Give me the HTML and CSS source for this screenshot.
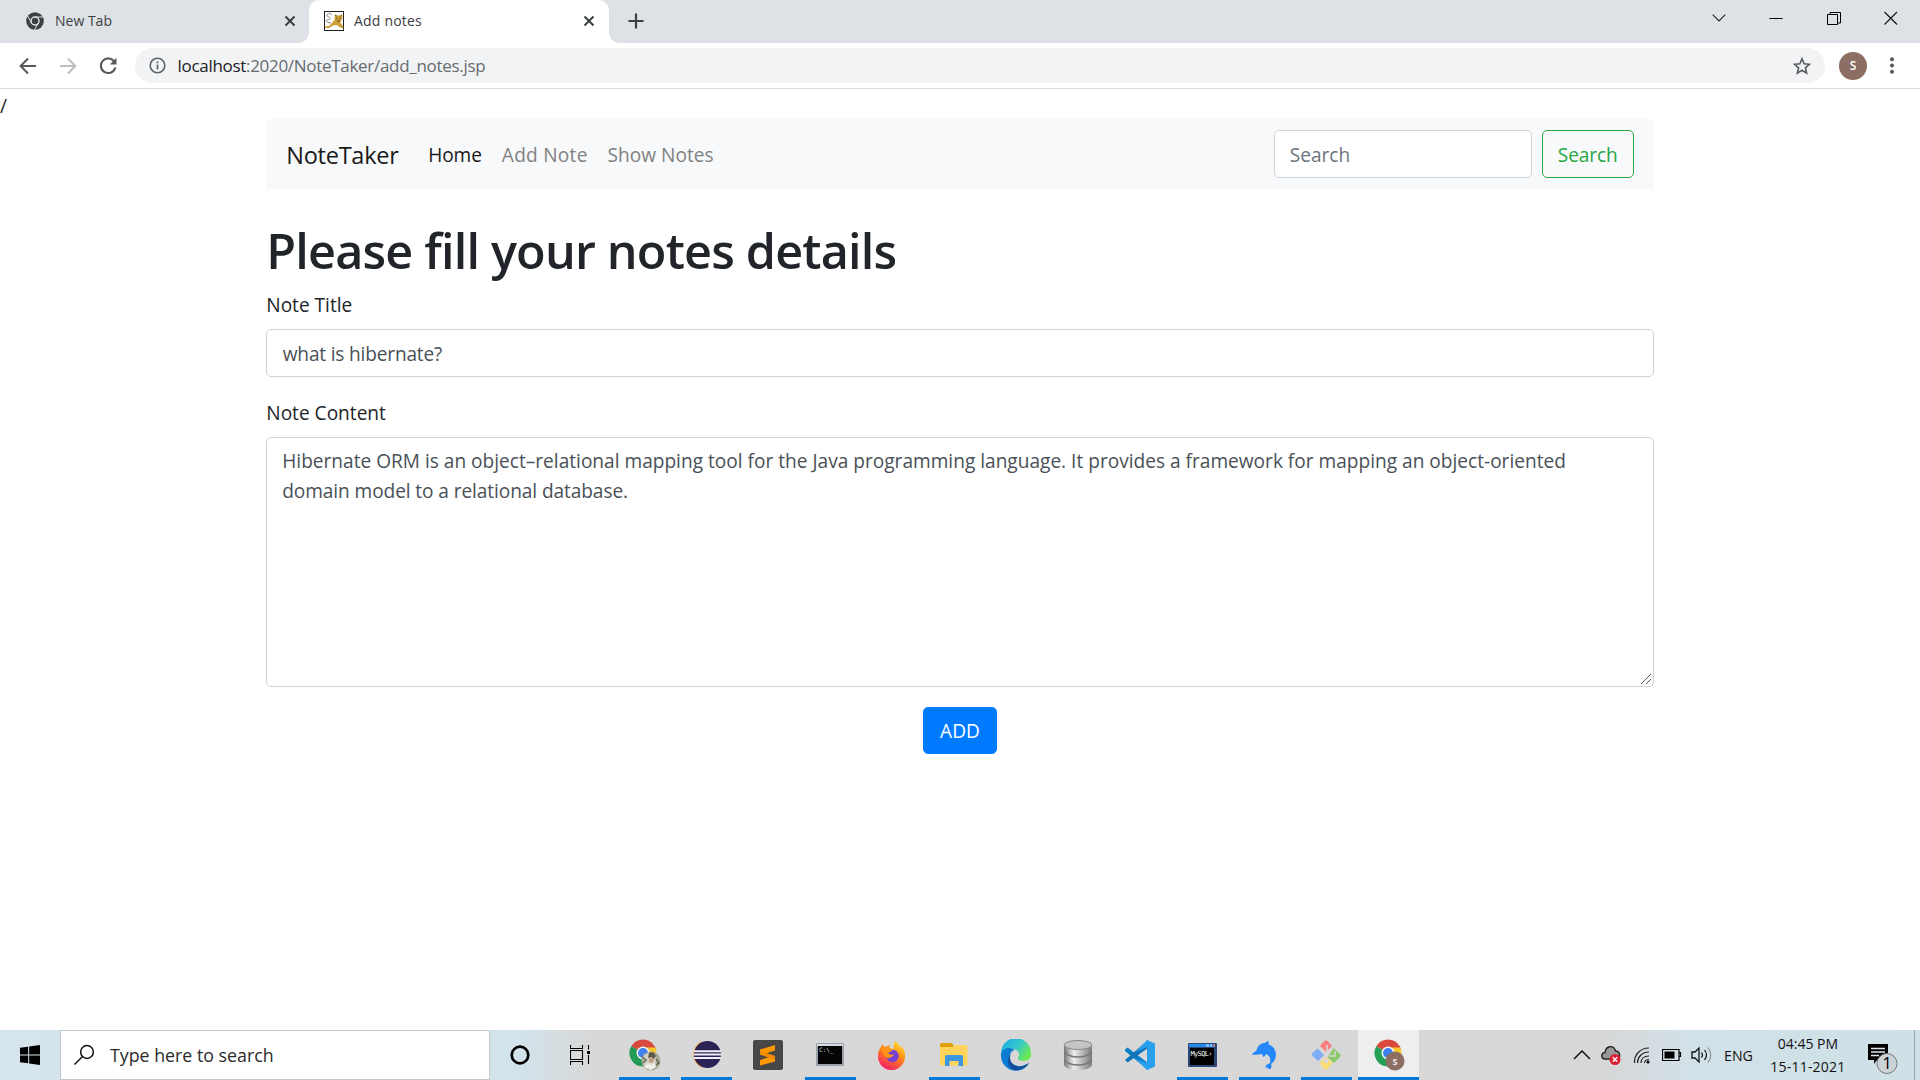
FILE: index.html
```html
<!DOCTYPE html>
<html lang="en">
<head>
<meta charset="utf-8">
<title>Add notes</title>
<link rel="stylesheet" href="styles.css">
</head>
<body>
<header class="tabstrip">
  <div class="tab tab-idle">
    <svg class="chrome-mono" width="18" height="18" viewBox="0 0 18 18"><circle cx="9" cy="9" r="8.8" fill="#3c4043"/><circle cx="9" cy="9" r="4" fill="none" stroke="#dee1e6" stroke-width="1.500"/><path d="M9 5H17M5.500 10.900 1.700 4M12.500 10.900 8.400 17.800" stroke="#dee1e6" stroke-width="1"/></svg>
    <span class="tab-title t-new">New Tab</span>
    <svg class="tab-close" width="12" height="12" viewBox="0 0 12 12"><path d="M1.500 1.500l9 9M10.500 1.500l-9 9" stroke="#3c4043" stroke-width="2"/></svg>
  </div>
  <div class="tab tab-active">
    <svg class="tomcat" width="20" height="20" viewBox="0 0 20 20"><rect x=".5" y=".5" width="19" height="19" fill="#fff" stroke="#222"/><path d="M11 3l2 1.500h3L18 3l.500 3.500-1 3-1.500 1.500 3 4 .5 2.500-3-1-4-2.500-3.500.5-4 2.500H1V15.500l4-.5 3-3 2.500-3z" fill="#cf9d35"/><path d="M11.500 4l1 1.500M17.500 4l-1 1.500M12.500 7.500h1M15.500 7.500h1M13 10h3" stroke="#5b4720" fill="none"/><path d="M7 12C3 12 1 10 3 9s4 0 3-2-4-1-3-3 4-2 5 0" stroke="#888" fill="none" stroke-width="1"/></svg>
    <span class="tab-title t-add">Add notes</span>
    <svg class="tab-close" width="12" height="12" viewBox="0 0 12 12"><path d="M1.500 1.500l9 9M10.500 1.500l-9 9" stroke="#3c4043" stroke-width="2"/></svg>
  </div>
  <svg class="new-tab" width="16" height="16" viewBox="0 0 16 16"><path d="M8 .5v15M.5 8h15" stroke="#3c4043" stroke-width="2.200"/></svg>
  <div class="window-buttons">
    <svg width="14" height="14" viewBox="0 0 14 14"><path d="M.7 3.700 7 10l6.300-6.300" fill="none" stroke="#222" stroke-width="1.100"/></svg>
    <svg width="14" height="14" viewBox="0 0 14 14"><path d="M.5 7.500h13" stroke="#000"/></svg>
    <svg width="14" height="14" viewBox="0 0 14 14"><path d="M.5 3.500h10v10H.5zM3 3V1.500h10.500v10.500H11" fill="none" stroke="#000"/></svg>
    <svg width="14" height="14" viewBox="0 0 14 14"><path d="M.5 1l12.500 12.500M13 1 .5 13.500" stroke="#111" stroke-width="1.100"/></svg>
  </div>
</header>
<div class="toolbar">
  <svg width="18" height="18" viewBox="0 0 18 18"><path d="M17 9H2M9 1.500 1.600 9 9 16.500" fill="none" stroke="#55595d" stroke-width="2"/></svg>
  <svg width="18" height="18" viewBox="0 0 18 18"><path d="M1 9h15M9 1.500 16.400 9 9 16.500" fill="none" stroke="#bcbec1" stroke-width="2"/></svg>
  <svg width="18" height="18" viewBox="0 0 18 18"><path d="M15.500 5A7.300 7.300 0 1 0 16.300 10.500" fill="none" stroke="#55595d" stroke-width="2.100"/><path d="M17.500.8V7.500H10.800z" fill="#55595d"/></svg>
  <div class="omnibox">
    <svg width="17" height="17" viewBox="0 0 17 17"><circle cx="8.500" cy="8.500" r="7.300" fill="none" stroke="#5f6368" stroke-width="1.600"/><path d="M8.500 7.500v5M8.500 4.500v1.700" stroke="#5f6368" stroke-width="1.700"/></svg>
    <span class="url"><span class="host">localhost</span>:2020/NoteTaker/add_notes.jsp</span>
    <svg class="star" width="18" height="18" viewBox="0 0 18 18"><path d="M9 1.800l2.100 5 5.300.5-4 3.500 1.200 5.300L9 13.300l-4.600 2.800 1.200-5.300-4-3.500 5.300-.5z" fill="none" stroke="#55595d" stroke-width="1.600"/></svg>
  </div>
  <span class="avatar">S</span>
  <svg class="kebab" width="4" height="17" viewBox="0 0 4 17"><g fill="#55595d"><circle cx="2" cy="2.200" r="2"/><circle cx="2" cy="8.500" r="2"/><circle cx="2" cy="14.800" r="2"/></g></svg>
</div>
<main class="page">
  <div class="stray">/</div>
  <div class="container">
    <nav class="navbar">
      <span class="brand">NoteTaker</span>
      <span class="link link-on">Home</span>
      <span class="link link-add">Add Note</span>
      <span class="link link-show">Show Notes</span>
      <div class="control search-field">Search</div>
      <div class="btn btn-outline">Search</div>
    </nav>
    <h1 class="heading"><span>Please fill your notes details</span></h1>
    <div class="label">Note Title</div>
    <div class="control title-field">what is hibernate?</div>
    <div class="label label-content">Note Content</div>
    <div class="control content-field"><span class="line-one">Hibernate ORM is an object–relational mapping tool for the Java programming language. It provides a framework for mapping an object-oriented</span><br><span class="line-two">domain model to a relational database.</span>
      <svg class="grip" width="12" height="12" viewBox="0 0 12 12"><path d="M1 11 11 1M6 11l5-5" stroke="#555" stroke-width="1"/></svg>
    </div>
    <div class="actions"><div class="btn btn-primary">ADD</div></div>
  </div>
</main>
<footer class="taskbar">
  <div class="start"><svg width="20" height="20" viewBox="0 0 20 20"><path d="M0 2.800 8.200 1.700V9.500H0zM9.200 1.500 20 0v9.500H9.200zM0 10.500h8.200v7.800L0 17.200zM9.200 10.500H20V20L9.200 18.500z"/></svg></div>
  <div class="task-search">
    <svg width="22" height="22" viewBox="0 0 22 22"><circle cx="14" cy="8" r="6.400" fill="none" stroke="#111" stroke-width="1.500"/><path d="M9.500 12.500 1.500 20.500" stroke="#111" stroke-width="1.500"/></svg>
    <span>Type here to search</span>
  </div>
  <div class="sys"><svg width="20" height="20" viewBox="0 0 20 20"><circle cx="10" cy="10" r="8.300" fill="none" stroke="#000" stroke-width="2.700"/></svg></div>
  <div class="sys sys-view"><svg width="20" height="20" viewBox="0 0 20 20"><path d="M.5 0v3.500h12V0M.5 5.500h12v9H.5zM.5 20v-3.500h12V20M18.500 0v4.500M18.500 10v9" fill="none" stroke="#000" stroke-width="1.100"/><path d="M17 6h3v3h-3z"/></svg></div>
  <div class="apps">
    <div class="app open first"><svg width="32" height="32" viewBox="0 0 32 32"><path d="M14 14 2.300 7.200A13.500 13.500 0 0 1 25.700 7.200L27 10H14z" fill="#d9493e"/><path d="M14 14 2.300 7.200A13.500 13.500 0 0 0 14 27.500L20 17z" fill="#249a56"/><path d="M14 14 20 17 14 27.500A13.500 13.500 0 0 0 26.300 8.500H14z" fill="#f5c52d"/><circle cx="14" cy="14" r="6.500" fill="#f5f5f5"/><circle cx="14" cy="14" r="5" fill="#3f82ee"/><circle cx="22" cy="22" r="9.500" fill="#aaa896"/><path d="M15 16l5-2 5 1 3 5-2 6-4 5-6-2-2-6z" fill="#d5d1c4"/><path d="M20 14l4-1 3 4-2 3-3-2-3 1z" fill="#5d5545"/><path d="M20 19l3-1 2 3-2 3-3-1z" fill="#c69c80"/><path d="M15 28l4-4 3 2 4-2 1 4-5 3z" fill="#efeee8"/><path d="M13 18l4 3-3 3M27 20l3 4-3 2" stroke="#62684f" fill="none" stroke-width="1.500"/></svg></div>
    <div class="app open"><svg width="32" height="32" viewBox="0 0 32 32"><path d="M13 2A14.200 14.200 0 0 0 13 29 17 17 0 0 1 13 2z" fill="#f7941e"/><circle cx="17.500" cy="15.500" r="13.500" fill="#2c2255"/><path d="M4 12.200h27M3.800 15.500h27.400M4 18.900h27" stroke="#eeeef8" stroke-width="2"/></svg></div>
    <div class="app"><svg width="32" height="32" viewBox="0 0 32 32"><rect x="1" y="1" width="30" height="30" rx="2" fill="#474747"/><path d="M8 10.500 23 6v5.500l-8.500 2.700L23 17v5.500L8 26.500V21l8.500-2.700L8 15.500z" fill="#ff9800"/><path d="M8 15.500V12l15 5v3.500z" fill="#f08a00"/></svg></div>
    <div class="app open"><svg width="32" height="32" viewBox="0 0 32 32"><rect x="2" y="4" width="28" height="23" rx="1" fill="#9ca2a9"/><path d="M3 5h26v2H3z" fill="#d5dae0"/><path d="M4 7h24v18H4z" fill="#050505"/><text x="5" y="12.500" class="console">C:\_</text></svg></div>
    <div class="app"><svg width="32" height="32" viewBox="0 0 32 32"><defs><linearGradient id="fox" x1=".8" y1="0" x2=".3" y2="1"><stop stop-color="#ffe32e"/><stop offset=".45" stop-color="#ff8a16"/><stop offset="1" stop-color="#f51b68"/></linearGradient></defs><path d="M19 2c4 3 5 5 5.500 7l1-2c3 4 4 7 3.500 11A13.500 13.500 0 0 1 2 17C2 13 3 10 5 8l1-3 3 3 5-2-1 3 5 1c-1-4 0-6 1-8z" fill="url(#fox)"/><circle cx="16.500" cy="17" r="6.200" fill="#7540d5"/><path d="M5 9l4 0 5-3-1 3 4 2-5 3c2 2 4 2 6 1-2 5-8 5-10 1z" fill="#ff9318"/></svg></div>
    <div class="app open"><svg width="32" height="32" viewBox="0 0 32 32"><path d="M2 5.500Q2 4 3.500 4H14l2 4H2z" fill="#dda000"/><path d="M2 8h13l2-2h11q1.500 0 1.500 1.500V25q0 1.500-1.500 1.500H3.500Q2 26.500 2 25z" fill="#ffd45d"/><path d="M7 27V18q0-2 2-2h14q2 0 2 2v9h-4.500v-5h-9v5z" fill="#3c97df"/></svg></div>
    <div class="app"><svg width="32" height="32" viewBox="0 0 32 32"><defs><linearGradient id="edge" x1="0" y1="0" x2="1" y2=".6"><stop stop-color="#16a8e0"/><stop offset=".55" stop-color="#35c6ce"/><stop offset="1" stop-color="#6bea50"/></linearGradient></defs><path d="M1 14A15 15 0 0 1 31 14c1 8-7 9-12 7-2-1-1-3 0-4 1-5-5-9-11-7-4 1-6 3-7 6z" fill="url(#edge)"/><path d="M1 15C2 9 10 7 15 11c-5 0-8 9-2 14 4 3 10 3 16-1A15 15 0 0 1 1 15z" fill="#087bd2"/><path d="M15 12c-7 2-6 11-1 14 5 3 10 1 15-2-3 5-9 8-15 7-9-4-7-16 1-19z" fill="#134f9b"/></svg></div>
    <div class="app"><svg width="32" height="32" viewBox="0 0 32 32"><defs><linearGradient id="disk"><stop stop-color="#777"/><stop offset=".35" stop-color="#eee"/><stop offset="1" stop-color="#7a7a7a"/></linearGradient></defs><path d="M2 5v21q2 5 14 5t14-5V5z" fill="url(#disk)"/><ellipse cx="16" cy="6" rx="14" ry="4.500" fill="#c4c4c4" stroke="#888"/><path d="M2 13q5 5 14 5t14-5M2 21q5 5 14 5t14-5" fill="none" stroke="#777" stroke-width="1.500"/></svg></div>
    <div class="app"><svg width="32" height="32" viewBox="0 0 32 32"><path d="M1 10.500 3.500 8.500 24 24v7L1 12z" fill="#087fc7"/><path d="M1 21 24 1v8L3.500 23.500z" fill="#1174b9"/><path d="M23 1l8 3.500v23L23 31 12 20l11 4V8L12 13z" fill="#28a0ec"/></svg></div>
    <div class="app open"><svg width="32" height="32" viewBox="0 0 32 32"><rect x="2" y="4" width="29" height="24" rx="1" fill="#294875"/><path d="M3 5h26v3H3z" fill="#2589e8"/><path d="M20 5.500h3v2h-3zM24 5.500h2v2h-2z" fill="#9ad2ff"/><path d="M27 5.500h2v2h-2z" fill="#f07642"/><path d="M4 9h24v17H4z" fill="#000"/><text x="4.500" y="17" class="mysql" textLength="22">MySQL›</text></svg></div>
    <div class="app open"><svg width="32" height="32" viewBox="0 0 32 32"><path d="M4 15.500c1-2 3-2.500 4.500-4C10 6 13 4 17 4c1-1 2-2 3.500-2 .5 1.500 0 2.500 0 3.500 6 2 8.500 8 7 13.500-1 3-3 5-4.500 6 1 2 .5 4-1 5.500-1-1.500-3-1-4.500-2.500 0-2.500 3-3 4.500-4 1-4-.5-8-4-9-.5 1.500-1.500 2.500-3 3 0-1.500-.5-2.500-1.500-3-3 0-6 1.500-9.500.5z" fill="#2488fc"/></svg></div>
    <div class="app open"><svg width="32" height="32" viewBox="0 0 32 32"><path d="M10 7l4.500-5q1.500-1.500 3 0L22 7l-6 6z" fill="#f9807c"/><path d="M7.500 9.500 14 16l-6 6-5.500-5q-1.300-1.500 0-3z" fill="#80adf8"/><path d="M16 18l6.500 6-5 6q-1.500 1.500-3 0L9.500 24z" fill="#fbdd75"/><path d="M23.500 9 30 15q1.500 1.500 0 3L24 24l-6.500-6 5-7z" fill="#8acb68"/><path d="M17 6v10l-4 4M25 12v5h-6" stroke="#d9d9d9" stroke-width="1.500" fill="none"/><circle cx="16" cy="22" r="2.200" fill="#d9d9d9"/></svg></div>
    <div class="app open active"><svg width="32" height="32" viewBox="0 0 32 32"><path d="M15 14 3.300 7.200A13.500 13.500 0 0 1 26.700 7.200L28 10H15z" fill="#dd4a3d"/><path d="M15 14 3.300 7.200A13.500 13.500 0 0 0 15 27.500L21 17z" fill="#25a057"/><path d="M15 14 21 17 15 27.500A13.500 13.500 0 0 0 27.300 8.500H15z" fill="#f9ca2c"/><circle cx="15" cy="14" r="6.500" fill="#fff"/><circle cx="15" cy="14" r="5" fill="#3b80ed"/><circle cx="22" cy="22" r="9.500" fill="#8d6e63"/><text x="22" y="25.500" class="mini">S</text></svg></div>
  </div>
  <div class="tray">
    <svg width="18" height="20" viewBox="0 0 18 20"><path d="M1 14 9 6l8 8" fill="none" stroke="#111" stroke-width="1.500"/></svg>
    <svg class="cloud" width="22" height="22" viewBox="0 0 22 22"><path d="M5 15C1 15 .5 9 5 8.500 6 1 14 1 15.500 7c5 0 5.500 8 1 8z" fill="#999" stroke="#222" stroke-width="1.400"/><circle cx="15" cy="15.500" r="5.500" fill="#db1f33"/><path d="M12.800 13.300l4.400 4.400M17.200 13.300l-4.400 4.400" stroke="#fff" stroke-width="1.400"/></svg>
    <svg width="18" height="20" viewBox="0 0 18 20"><path d="M1.500 18C1 10 7 3 16 3M4.500 18C4.500 12 9 7 16 7M8 18c0-4 3-7 8-7M11.500 18c0-2 2-3.500 4.500-3.500" fill="none" stroke="#222" stroke-width="1.200"/><circle cx="15" cy="17" r="1.500"/></svg>
    <svg width="20" height="12" viewBox="0 0 20 12"><path d="M.5.5h16.500v11H.5zM17 3.500h1.500v4H17" fill="none" stroke="#000" stroke-width="1.200"/><path d="M2.500 2.500h10v7h-10z"/></svg>
    <svg class="speaker" width="22" height="20" viewBox="0 0 22 20"><path d="M1 7h3l4-4v14l-4-4H1z" fill="none" stroke="#111" stroke-width="1.300"/><path d="M10.500 7.500q2 2.500 0 5M13.500 5q4 5 0 10" fill="none" stroke="#111" stroke-width="1.200"/><path d="M17 2.500q5.500 7.500 0 15" fill="none" stroke="#889399" stroke-width="1.200"/></svg>
    <span class="lang">ENG</span>
    <div class="clock"><span class="time">04:45 PM</span><span class="date">15-11-2021</span></div>
    <svg class="notice" width="32" height="32" viewBox="0 0 32 32"><path d="M1 1h20v16H10l-3 4v-4H1z"/><path d="M4 5.500h14M4 9h14M4 12.500h8" stroke="#dce5ea" stroke-width="1.300"/><circle cx="20" cy="20.500" r="10" fill="#ccd3d6" stroke="#777" stroke-width="1"/><text x="20" y="26" class="count">1</text></svg>
    <div class="peek"></div>
  </div>
</footer>
</body>
</html>
```
FILE: styles.css
```css
* { box-sizing: border-box; }
body { margin: 0; width: 1920px; height: 1080px; overflow: hidden; display: flex; flex-direction: column; background: #fff; color: #212529; font-family: "Open Sans", "Noto Sans", sans-serif; }
svg { display: block; flex: none; }
span { white-space: nowrap; }
.tabstrip { height: 43px; flex: none; display: flex; background: #dee1e6; align-items: center; }
.tab { display: flex; align-items: center; height: 43px; color: #3c4043; font-size: 14px; }
.tab-idle { width: 309px; padding: 0 13px 2px 26px; }
.tab-active { width: 300px; padding: 0 14px 2px 15px; background: #fff; border-radius: 10px 10px 0 0; position: relative; }
.tab-active::before, .tab-active::after { content: ""; position: absolute; bottom: 0; width: 10px; height: 10px; }
.tab-active::before { left: -10px; background: radial-gradient(circle at 0 0, #dee1e6 9.5px, #fff 10px); }
.tab-active::after { right: -10px; background: radial-gradient(circle at 100% 0, #dee1e6 9.5px, #fff 10px); }
.tab-title { margin-left: 10px; flex: 1; }
.t-new { margin-left: 11px; }
.t-add { letter-spacing: .2px; }
.new-tab { margin: -1px 0 0 19px; }
.window-buttons { margin: -7px 22px 0 auto; display: flex; gap: 43.500px; }
.toolbar { height: 46px; flex: none; display: flex; align-items: center; padding: 0 25px 0 19px; gap: 22px; border-bottom: 1px solid #d9dbde; }
.omnibox { width: 1690px; height: 35px; margin-left: -4px; border-radius: 18px; background: #f1f3f4; display: flex; align-items: center; padding: 0 14px; color: #676b70; font-size: 17px; }
.url { margin-left: 11.500px; letter-spacing: -.3px; }
.host { color: #202124; }
.star { margin-left: auto; }
.avatar { width: 28px; height: 28px; margin-left: -8px; border-radius: 50%; background: #8d6e63; color: #fff; font: 600 12px/28px "Open Sans", sans-serif; text-align: center; }
.kebab { margin-left: 1px; }
.page { flex: 1; font-size: 19.100px; line-height: 30px; }
.stray { height: 30px; padding-top: 2px; }
.container { width: 1387.500px; margin: 0 auto; }
.navbar { height: 70px; background: #f8f9fa; display: flex; align-items: center; padding: 0 20px; color: #808182; }
.brand { font-size: 23.500px; color: #191919; width: 142px; letter-spacing: -.25px; padding-top: 2px; }
.link { margin-right: 20px; padding-top: 1px; }
.link-on { color: #191919; letter-spacing: -.1px; }
.link-add { letter-spacing: .25px; }
.control { border: 1px solid #ced4da; border-radius: 5px; background: #fff; color: #495057; padding: 9px 15px 7px; height: 47.500px; }
.search-field { width: 258px; margin-left: auto; color: #6c757d; padding-top: 8.500px; }
.title-field { padding-left: 15.500px; letter-spacing: -.18px; }
.btn { height: 47.500px; border: 1px solid; border-radius: 5px; padding: 8px 0; text-align: center; }
.btn-outline { width: 92px; margin-left: 10px; color: #28a745; border-color: #28a745; padding-top: 8.500px; letter-spacing: -.1px; }
.heading { margin: 30px 0 10px; padding-top: 1px; height: 60px; font-weight: 600; font-size: 48.500px; line-height: 60px; letter-spacing: -.800px; }
.label { margin-bottom: 10px; height: 30px; padding-top: 1px; }
.label-content { margin-top: 20px; }
.content-field { height: 250px; position: relative; padding-top: 8.500px; }
.line-two { letter-spacing: -.09px; }
.grip { position: absolute; right: 1px; bottom: 1px; }
.actions { display: flex; justify-content: center; padding-top: 20px; }
.btn-primary { width: 74px; background: #007bff; border-color: #007bff; color: #fff; }
.taskbar { height: 50px; flex: none; display: flex; background: linear-gradient(90deg, #d6e4ec 0, #d2e3eb 520px, #d8d8d8 590px, #d7d7d7 1600px, #d2e1e8 1690px, #cfe0e7 1920px); }
.start { width: 60px; display: flex; align-items: center; justify-content: center; }
.task-search { width: 430px; border: 1px solid #c5c8ca; background: #fff; display: flex; align-items: center; padding-left: 12px; gap: 15px; color: #2b2b2b; font-size: 17.800px; }
.sys { width: 60px; display: flex; align-items: center; justify-content: center; }
.sys-view { width: 64px; padding-right: 4px; }
.apps { display: flex; width: 806px; }
.app { width: 62px; height: 50px; display: flex; align-items: center; justify-content: center; padding-right: 3px; background: linear-gradient(#0078d7, #0078d7) 5px 100% / 0 3px no-repeat; }
.first { padding-right: 0; }
.open { background-size: 51px 3px; }
.active { background: #eee; width: 61px; padding-right: 0; box-shadow: inset 0 -3px #0078d7; }
.console { font: 6px "DejaVu Sans Mono", monospace; fill: #ddd; }
.mysql { font: 7px "DejaVu Sans Mono", monospace; fill: #fff; }
.mini { font: bold 9px "Open Sans", sans-serif; fill: #eee; text-anchor: middle; }
.tray { flex: 1; display: flex; align-items: center; padding-left: 153px; gap: 11px; color: #111; }
.cloud { margin-left: -2px; }
.speaker { margin-left: -2px; }
.lang { font-size: 14.200px; }
.clock { width: 80px; margin-left: 4px; display: flex; flex-direction: column; text-align: center; font-size: 14px; line-height: 23px; }
.date { letter-spacing: .2px; }
.notice { margin: 8px 0 0 8px; }
.count { font: 17px "Open Sans", sans-serif; text-anchor: middle; }
.peek { width: 1px; height: 50px; background: #91a3ab; margin-left: auto; margin-right: 5px; }
```
